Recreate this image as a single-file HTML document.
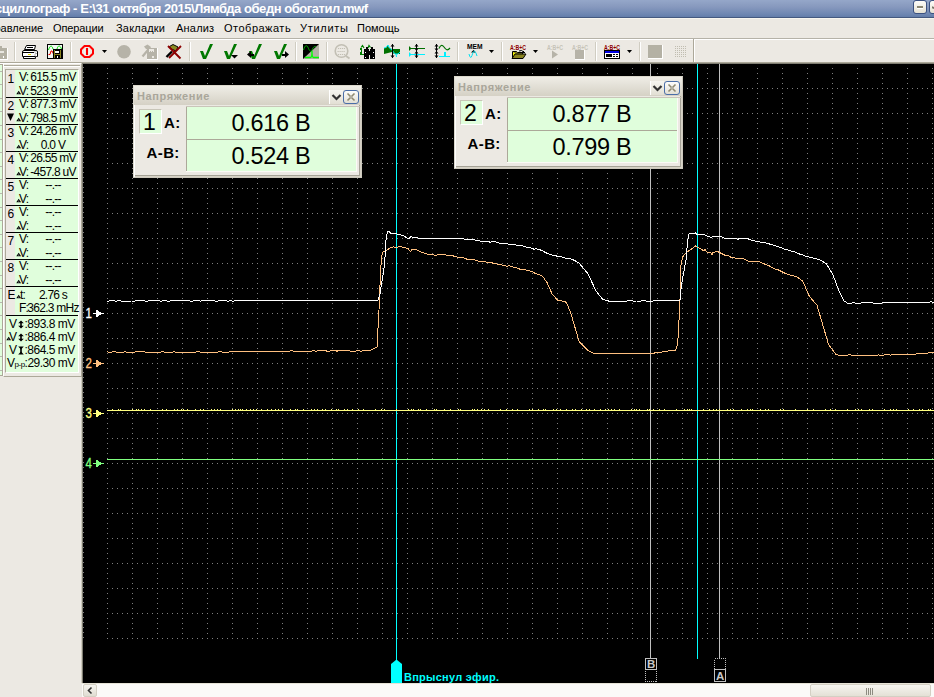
<!DOCTYPE html>
<html><head><meta charset="utf-8">
<style>
*{margin:0;padding:0;box-sizing:border-box}
html,body{width:934px;height:697px;overflow:hidden;background:#ECE9E3;font-family:"Liberation Sans",sans-serif;}
.a{position:absolute}
#title{left:0;top:0;width:934px;height:18px;background:linear-gradient(#95a7c9,#8799be 40%,#6d86b1 85%,#637da9);border-bottom:1px solid #44597f}
#title span{position:absolute;left:-5px;top:1px;font-weight:bold;font-size:13px;color:#fff;white-space:nowrap;letter-spacing:-0.45px}
.wbtn{position:absolute;top:0;width:14px;height:14px;border:1px solid #3b5180;border-radius:3px;background:linear-gradient(#fdfcf8,#e6e2d4)}
#menu{left:0;top:18px;width:934px;height:20px;background:#ECE9E3;border-top:1px solid #f7f5ee}
#menu span{position:absolute;top:3px;font-size:11px;color:#000;white-space:nowrap}
#tb{left:0;top:39px;width:934px;height:23px;background:#ECE9E3;border-top:1px solid #fff}
.sep{position:absolute;top:5px;width:2px;height:19px;border-left:1px solid #c5c2b2;border-right:1px solid #fff}
#graph{left:81px;top:62px;width:853px;height:621px;background:#000;border-top:1px solid #aca899;border-left:1px solid #cfccbf;box-shadow:inset 1px 1px 0 #7f7d72}
#lp{left:0;top:62px;width:82px;height:314px}
.lt{position:absolute;font-size:12px;color:#000;white-space:nowrap;letter-spacing:-0.75px}
.dlg{position:absolute;width:229px;height:93px;background:#ECE9E3;border:1px solid #dcd9cd;border-right-color:#cdc9bd;border-bottom-color:#cdc9bd;box-shadow:inset 1px 1px 0 #fff,inset -1px -1px 0 #d6d2c6,inset -2px -2px 0 #a5a296}
.dlg .tt{position:absolute;left:0;top:0;width:227px;height:19px;background:linear-gradient(#efede6,#d5d1c5)}
.dlg .tt span{position:absolute;left:3px;top:4px;font-weight:bold;font-size:11px;color:#a9a69a;letter-spacing:0.6px}
.cell{position:absolute;background:#E0FEDC}
.val{position:absolute;font-size:23.5px;color:#000;white-space:nowrap;letter-spacing:-0.3px}
.lab{position:absolute;font-weight:bold;font-size:15px;color:#000;white-space:nowrap}
</style></head><body>
<div id="title" class="a"><span>сциллограф - E:\31 октября 2015\Лямбда обедн обогатил.mwf</span>
<div class="wbtn" style="left:913px"><div style="position:absolute;left:3px;top:5px;width:6px;height:3px;background:#8a8672;border-bottom:1px solid #fff"></div></div>
<div class="wbtn" style="left:929px"><div style="position:absolute;left:2px;top:6px;width:4px;height:2px;background:#7a776a;transform:skewY(20deg)"></div></div>
</div>
<div id="menu" class="a">
<span style="left:-18px">Управление</span>
<span style="left:53px;letter-spacing:-0.1px">Операции</span>
<span style="left:116px;letter-spacing:0.2px">Закладки</span>
<span style="left:176px;letter-spacing:0.2px">Анализ</span>
<span style="left:224px;letter-spacing:0.5px">Отображать</span>
<span style="left:300px;letter-spacing:0.7px">Утилиты</span>
<span style="left:357px">Помощь</span>
</div>
<div style="position:absolute;left:0;top:38px;width:934px;height:1px;background:#b5b2a8"></div>
<div id="tb" class="a"></div>
<svg class="a" style="left:0;top:38px" width="934" height="24" viewBox="0 38 934 24" shape-rendering="crispEdges">
<rect x="14" y="42" width="1" height="19" fill="#d0cdc2"/><rect x="15" y="42" width="1" height="19" fill="#fff"/>
<rect x="70" y="42" width="1" height="19" fill="#d0cdc2"/><rect x="71" y="42" width="1" height="19" fill="#fff"/>
<rect x="189" y="42" width="1" height="19" fill="#d0cdc2"/><rect x="190" y="42" width="1" height="19" fill="#fff"/>
<rect x="295" y="42" width="1" height="19" fill="#d0cdc2"/><rect x="296" y="42" width="1" height="19" fill="#fff"/>
<rect x="326" y="42" width="1" height="19" fill="#d0cdc2"/><rect x="327" y="42" width="1" height="19" fill="#fff"/>
<rect x="457" y="42" width="1" height="19" fill="#d0cdc2"/><rect x="458" y="42" width="1" height="19" fill="#fff"/>
<rect x="501" y="42" width="1" height="19" fill="#d0cdc2"/><rect x="502" y="42" width="1" height="19" fill="#fff"/>
<rect x="595" y="42" width="1" height="19" fill="#d0cdc2"/><rect x="596" y="42" width="1" height="19" fill="#fff"/>
<rect x="639" y="42" width="1" height="19" fill="#d0cdc2"/><rect x="640" y="42" width="1" height="19" fill="#fff"/>
<rect x="693" y="39" width="1" height="23" fill="#aca899"/><rect x="694" y="39" width="1" height="23" fill="#fff"/>
<path d="M0 46h2v2h5v11H0z" fill="#b4b1a4"/><rect x="7" y="48" width="1" height="12" fill="#fff"/><rect x="0" y="59" width="8" height="1" fill="#fff"/><rect x="0" y="51" width="4" height="2" fill="#e8e6e0"/><rect x="3" y="56" width="1" height="2" fill="#fff"/>
<g shape-rendering="auto"><path d="M26.5 45.5 H35.5 L34.5 49.5 H24.5 Z" fill="#fff" stroke="#000" stroke-width="1"/><rect x="27" y="47" width="6" height="1" fill="#000"/><path d="M24 50.5 H36 Q37.5 50.5 37.5 52 V56.5 H22.5 V52 Q22.5 50.5 24 50.5Z" fill="#fff" stroke="#000" stroke-width="1"/><rect x="23" y="52" width="11" height="1" fill="#000"/><rect x="28" y="54" width="3" height="1" fill="#e8e000"/><path d="M23.5 56.5 H35.5 V58.5 H23.5 Z" fill="#fff" stroke="#000" stroke-width="1"/><path d="M35 51.5v1M36 53v1M35 54.5v1M36 56v1M35 57.5v1" stroke="#666" stroke-width="1"/></g>
<rect x="47.5" y="44.5" width="15" height="14" fill="#f4f8f4" stroke="#000"/><path d="M48.5 50 C50 45,52 45,53 49 M57 49 C58 45,60 45,61.5 49" fill="none" stroke="#00e000" stroke-width="1" shape-rendering="auto"/><path d="M48.5 54.5 L50 54.5 L51 51 L52 51 L53.5 54" fill="none" stroke="#f00000" stroke-width="1" shape-rendering="auto"/><rect x="53" y="49" width="9" height="9" fill="#000"/><rect x="54" y="50" width="1" height="8" fill="#8a8420"/><rect x="60" y="50" width="1" height="8" fill="#8a8420"/><rect x="55" y="51" width="4" height="2" fill="#fff"/><rect x="55" y="54" width="5" height="1" fill="#8a8420"/><rect x="57" y="56" width="1" height="2" fill="#fff"/>
<path d="M84.5 46 H89.5 L93 49.5 V53.5 L89.5 57 H84.5 L81 53.5 V49.5 Z" fill="none" stroke="#ff0000" stroke-width="2" shape-rendering="auto"/><path d="M84.2 48.5 V54.5 M89.8 48.5 V54.5" stroke="#eef8f4" stroke-width="1"/><rect x="86" y="48" width="2" height="7" fill="#ff0000"/>
<path d="M102 50h5l-2.5 3z" fill="#000" shape-rendering="auto"/>
<path d="M489 50h5l-2.5 3z" fill="#000" shape-rendering="auto"/>
<path d="M533 50h5l-2.5 3z" fill="#000" shape-rendering="auto"/>
<path d="M627 50h5l-2.5 3z" fill="#000" shape-rendering="auto"/>
<circle cx="124" cy="51.8" r="6.8" fill="#b6b3a8" shape-rendering="auto"/>
<path d="M142.5 56.5 L147.5 50.5" stroke="#b6b3a8" stroke-width="2.2" shape-rendering="auto"/><path d="M144 46.5 L147.5 44.5 L151 47 L149.5 50 L146 49z" fill="#b6b3a8" shape-rendering="auto"/><rect x="147" y="48" width="10" height="11" fill="#b6b3a8"/><rect x="157" y="48" width="1" height="12" fill="#fff"/><rect x="147" y="59" width="11" height="1" fill="#fff"/><path d="M149 49h5v3l-1.5-1-1 1-1-1-1.5 1z" fill="#ECE9E3"/><rect x="152" y="56" width="2" height="2" fill="#ECE9E3"/>
<path d="M166.5 57 L172 51.5" stroke="#000" stroke-width="2.4" shape-rendering="auto"/><path d="M169.5 46.5 L173 44.5 L178 47 L176 51 L171.5 49z" fill="#8a8a20" stroke="#000" stroke-width="1" shape-rendering="auto"/><path d="M168 46 L180.5 58.5 M181 46 L169 58" stroke="#8c0000" stroke-width="1.9" shape-rendering="auto"/>
<path d="M200 51 L203 51 L205 56 L210 44 L213 44 L206 59 L203 59 Z" fill="#007800" shape-rendering="auto"/>
<path d="M224 51 L227 51 L229 56 L234 44 L237 44 L230 59 L227 59 Z" fill="#007800" shape-rendering="auto"/><path d="M231 55h7l-3.5 3.5z" fill="#000" shape-rendering="auto"/>
<path d="M249 51 L252 51 L254 56 L259 44 L262 44 L255 59 L252 59 Z" fill="#007800" shape-rendering="auto"/><path d="M247 54.5l4-3.5v7z" fill="#000" shape-rendering="auto"/><rect x="250" y="54" width="4" height="1.5" fill="#000"/>
<path d="M274 51 L277 51 L279 56 L284 44 L287 44 L280 59 L277 59 Z" fill="#007800" shape-rendering="auto"/><path d="M289 54.5l-4-3.5v7z" fill="#000" shape-rendering="auto"/><rect x="282" y="54" width="4" height="1.5" fill="#000"/>
<rect x="303" y="44" width="16" height="15" fill="#000"/><path d="M319 44 L319 59 L303 59 Z" fill="#b4b1a6" shape-rendering="auto"/><path d="M303.5 50 C305 44.5,307 44.5,308.5 48.5 C310 52,311.5 52,312.5 49 C313.5 46.5,315 46,316 47" fill="none" stroke="#00b000" stroke-width="1" shape-rendering="auto"/><path d="M305 57.5 H310.5 Q312 57.5 312 51 Q312 57.5 313.5 57.5 H319" fill="none" stroke="#00ff00" stroke-width="1.3" shape-rendering="auto"/>
<circle cx="341.5" cy="51" r="6.3" fill="none" stroke="#c2bfb4" stroke-width="1.6" shape-rendering="auto"/><path d="M338 48.5h7M337.5 51.5h8M338 54.5h7" stroke="#c2bfb4" stroke-width="1" stroke-dasharray="1.2,0.8" shape-rendering="auto"/><path d="M346 56l3.5 2.5" stroke="#c2bfb4" stroke-width="1.8" shape-rendering="auto"/>
<path d="M361 47.5 L362.5 45.5 L364 48 M368 48 L369 45.5 L370.5 47.5" fill="none" stroke="#008000" stroke-width="1.2" shape-rendering="auto"/><path d="M360 48h2v2h-2zM360 52h2v2h-2zM361 50h1v2h-1z" fill="#008000"/><rect x="360" y="54" width="6" height="1" fill="#008000"/><rect x="364" y="49" width="5" height="10" fill="#000"/><rect x="370" y="49" width="5" height="10" fill="#000"/><rect x="368" y="51" width="3" height="4" fill="#000"/><rect x="366" y="47" width="2" height="2" fill="#000"/><rect x="371" y="47" width="2" height="2" fill="#000"/><rect x="365" y="57" width="1" height="1" fill="#fff"/><rect x="373" y="57" width="1" height="1" fill="#fff"/><rect x="365" y="52" width="1" height="1" fill="#fff"/><rect x="373" y="52" width="1" height="1" fill="#fff"/>
<path d="M384 48 L386 48 L388 45 L389 48 L392 49 L400 49 L400 54 L394 54 L392 52 L384 54z" fill="#007000" shape-rendering="auto"/><path d="M384 48 L386 47.5 L388 45 L389.5 48 L392 50 L395 54 L398 54 L400 52 M396 54 L396.5 57" fill="none" stroke="#00f0ff" stroke-width="1" shape-rendering="auto"/><rect x="392" y="44" width="1" height="14" fill="#000"/><path d="M390.5 46.5 L392.5 44 L394.5 46.5z M390.5 55.5 L392.5 58 L394.5 55.5z" fill="#000" shape-rendering="auto"/>
<rect x="411" y="48" width="14" height="1" fill="#007000"/><path d="M409 46v5l2.5-2.5z" fill="#007000" shape-rendering="auto"/><rect x="411" y="54" width="14" height="1" fill="#00f0ff"/><path d="M409 52v5l2.5-2.5z" fill="#00f0ff" shape-rendering="auto"/><rect x="416" y="44" width="1" height="7" fill="#000"/><path d="M414.5 46.5 L416.5 44 L418.5 46.5z M414.5 48.5 L416.5 51 L418.5 48.5z" fill="#000" shape-rendering="auto"/><rect x="416" y="51" width="1" height="7" fill="#000"/><path d="M414.5 53.5 L416.5 51 L418.5 53.5z M414.5 55.5 L416.5 58 L418.5 55.5z" fill="#000" shape-rendering="auto"/>
<rect x="436" y="44" width="1" height="7" fill="#000"/><path d="M434.5 46.5 L436.5 44 L438.5 46.5z M434.5 48.5 L436.5 51 L438.5 48.5z" fill="#000" shape-rendering="auto"/><rect x="436" y="51" width="1" height="7" fill="#000"/><path d="M434.5 53.5 L436.5 51 L438.5 53.5z M434.5 55.5 L436.5 58 L438.5 55.5z" fill="#000" shape-rendering="auto"/><path d="M439 48.5 C440.5 45,442 44.5,444 47 C446 50,447.5 51,450 48" fill="none" stroke="#007000" stroke-width="1.2" shape-rendering="auto"/><path d="M439 56.5h5.5v-3.5h1v3.5h4.5" fill="none" stroke="#00f0ff" stroke-width="1.1"/>
<text x="467" y="49" font-family="Liberation Sans" font-weight="bold" font-size="6.5" textLength="15.5" lengthAdjust="spacingAndGlyphs" fill="#000" shape-rendering="auto">MEM</text><path d="M471 52.5l2.5-2.5 2.5 2.5z" fill="#000" shape-rendering="auto"/><path d="M469 54 Q470.5 60 472 55.5 Q473.5 50 475 51.5 Q476 52.5 477 56" fill="none" stroke="#00e0f0" stroke-width="1" shape-rendering="auto"/>
<text x="510" y="49.5" font-family="Liberation Sans" font-weight="bold" font-size="6.8" textLength="16" lengthAdjust="spacingAndGlyphs" fill="#8c0000" shape-rendering="auto">A:B+C</text><path d="M512.5 58.5 V51.5 H516.5 L517.5 52.5 H522.5 V54" fill="#8a8420" stroke="#000" stroke-width="1" shape-rendering="auto"/><path d="M513 52 L517 54.5 L513 56.5z" fill="#f0f000" shape-rendering="auto"/><path d="M512 58.5 L515 54 L526 54 L523 58.5z" fill="#8a8420" stroke="#000" stroke-width="1" shape-rendering="auto"/><path d="M519 51 Q522 49.5 523.5 52" fill="none" stroke="#000" stroke-width="1" shape-rendering="auto"/><path d="M522 52.5h3l-1.5-2z" fill="#000"/>
<text x="547" y="49.5" font-family="Liberation Sans" font-weight="bold" font-size="6.8" textLength="16" lengthAdjust="spacingAndGlyphs" fill="#c6c3b8" shape-rendering="auto">A:B+C</text><path d="M552 50.5 L558 54.5 L552 58.5z" fill="#b6b3a8" shape-rendering="auto"/>
<text x="572" y="49.5" font-family="Liberation Sans" font-weight="bold" font-size="6.8" textLength="16" lengthAdjust="spacingAndGlyphs" fill="#c6c3b8" shape-rendering="auto">A:B+C</text><rect x="575" y="50" width="9" height="9" fill="#b6b3a8"/><rect x="584" y="50" width="1" height="10" fill="#fff"/><rect x="575" y="59" width="10" height="1" fill="#fff"/>
<text x="604" y="49.5" font-family="Liberation Sans" font-weight="bold" font-size="6.8" textLength="16" lengthAdjust="spacingAndGlyphs" fill="#8c0000" shape-rendering="auto">A:B+C</text><rect x="604.5" y="50.5" width="15" height="8" fill="#fff" stroke="#000"/><rect x="605" y="51" width="14" height="2" fill="#0000e0"/><rect x="606" y="54" width="6" height="3" fill="#000"/><rect x="613" y="54" width="2" height="1" fill="#000"/><rect x="616" y="54" width="2" height="1" fill="#000"/><rect x="613" y="56" width="2" height="1" fill="#000"/><rect x="616" y="56" width="2" height="1" fill="#000"/>
<rect x="648" y="45" width="14" height="13" fill="#b4b1a4"/><rect x="662" y="45" width="1" height="14" fill="#fff"/><rect x="648" y="58" width="15" height="1" fill="#fff"/>
<g fill="#c0bdb0"><rect x="675" y="46" width="1" height="1"/><rect x="675" y="48" width="1" height="1"/><rect x="675" y="50" width="1" height="1"/><rect x="675" y="52" width="1" height="1"/><rect x="675" y="54" width="1" height="1"/><rect x="675" y="56" width="1" height="1"/><rect x="677" y="46" width="1" height="1"/><rect x="677" y="48" width="1" height="1"/><rect x="677" y="50" width="1" height="1"/><rect x="677" y="52" width="1" height="1"/><rect x="677" y="54" width="1" height="1"/><rect x="677" y="56" width="1" height="1"/><rect x="679" y="46" width="1" height="1"/><rect x="679" y="48" width="1" height="1"/><rect x="679" y="50" width="1" height="1"/><rect x="679" y="52" width="1" height="1"/><rect x="679" y="54" width="1" height="1"/><rect x="679" y="56" width="1" height="1"/><rect x="681" y="46" width="1" height="1"/><rect x="681" y="48" width="1" height="1"/><rect x="681" y="50" width="1" height="1"/><rect x="681" y="52" width="1" height="1"/><rect x="681" y="54" width="1" height="1"/><rect x="681" y="56" width="1" height="1"/><rect x="683" y="46" width="1" height="1"/><rect x="683" y="48" width="1" height="1"/><rect x="683" y="50" width="1" height="1"/><rect x="683" y="52" width="1" height="1"/><rect x="683" y="54" width="1" height="1"/><rect x="683" y="56" width="1" height="1"/><rect x="685" y="46" width="1" height="1"/><rect x="685" y="48" width="1" height="1"/><rect x="685" y="50" width="1" height="1"/><rect x="685" y="52" width="1" height="1"/><rect x="685" y="54" width="1" height="1"/><rect x="685" y="56" width="1" height="1"/></g>
</svg>
<div id="graph" class="a"></div>
<svg width="851" height="619" viewBox="83 64 851 619" style="position:absolute;left:83px;top:64px;display:block" shape-rendering="crispEdges">
<defs><pattern id="gv" x="107" y="68" width="25" height="5" patternUnits="userSpaceOnUse"><rect width="1" height="1" fill="#808080"/></pattern><pattern id="gh" x="107" y="88" width="5" height="25" patternUnits="userSpaceOnUse"><rect width="1" height="1" fill="#808080"/></pattern><pattern id="tk" x="83" y="67" width="3" height="5" patternUnits="userSpaceOnUse"><rect width="1" height="1" fill="#808080"/></pattern></defs>
<rect x="83" y="64" width="851" height="619" fill="#000"/>
<rect x="107" y="64" width="827" height="575" fill="url(#gv)"/>
<rect x="107" y="88" width="827" height="551" fill="url(#gh)"/>
<rect x="83" y="64" width="2" height="575" fill="url(#tk)"/>
<rect x="650" y="64" width="1" height="594" fill="#c0c0c0"/>
<rect x="719" y="64" width="1" height="594" fill="#c0c0c0"/>
<rect x="396" y="64" width="1" height="597" fill="#00ffff"/>
<rect x="697" y="64" width="1" height="595" fill="#00ffff"/>
<g fill="none" stroke-linejoin="round" shape-rendering="crispEdges">
<rect x="107" y="410" width="827" height="1" fill="#ffff80"/>
<path d="M112 409.5h1M118 409.5h1M120 409.5h1M132 409.5h1M136 409.5h1M138 409.5h1M141 409.5h1M144 409.5h1M150 409.5h1M162 409.5h1M166 409.5h1M174 409.5h1M177 409.5h1M181 409.5h1M183 409.5h1M187 409.5h1M195 409.5h1M200 409.5h1M203 409.5h1M211 409.5h1M214 409.5h1M217 409.5h1M220 409.5h1M232 409.5h1M235 409.5h1M238 409.5h1M240 409.5h1M242 409.5h1M246 409.5h1M250 409.5h1M253 409.5h1M256 409.5h1M261 409.5h1M267 409.5h1M271 409.5h1M275 409.5h1M278 409.5h1M282 409.5h1M290 409.5h1M295 409.5h1M297 409.5h1M303 409.5h1M311 409.5h1M314 409.5h1M317 409.5h1M322 409.5h1M325 409.5h1M331 409.5h1M336 409.5h1M338 409.5h1M344 409.5h1M347 409.5h1M352 409.5h1M358 409.5h1M363 409.5h1M375 409.5h1M381 409.5h1M384 409.5h1M396 409.5h1M408 409.5h1M411 409.5h1M413 409.5h1M418 409.5h1M420 409.5h1M426 409.5h1M434 409.5h1M436 409.5h1M444 409.5h1M450 409.5h1M458 409.5h1M460 409.5h1M472 409.5h1M474 409.5h1M477 409.5h1M481 409.5h1M484 409.5h1M488 409.5h1M500 409.5h1M506 409.5h1M512 409.5h1M517 409.5h1M529 409.5h1M532 409.5h1M538 409.5h1M543 409.5h1M545 409.5h1M553 409.5h1M556 409.5h1M560 409.5h1M566 409.5h1M572 409.5h1M575 409.5h1M581 409.5h1M586 409.5h1M589 409.5h1M594 409.5h1M600 409.5h1M605 409.5h1M608 409.5h1M611 409.5h1M614 409.5h1M619 409.5h1M631 409.5h1M634 409.5h1M636 409.5h1M639 409.5h1M647 409.5h1M649 409.5h1M653 409.5h1M659 409.5h1M664 409.5h1M676 409.5h1M684 409.5h1M687 409.5h1M689 409.5h1M691 409.5h1M703 409.5h1M709 409.5h1M713 409.5h1M716 409.5h1M719 409.5h1M727 409.5h1M730 409.5h1M733 409.5h1M741 409.5h1M747 409.5h1M750 409.5h1M752 409.5h1M760 409.5h1M765 409.5h1M768 409.5h1M780 409.5h1M783 409.5h1M795 409.5h1M807 409.5h1M813 409.5h1M825 409.5h1M830 409.5h1M835 409.5h1M847 409.5h1M855 409.5h1M858 409.5h1M861 409.5h1M869 409.5h1M872 409.5h1M884 409.5h1M890 409.5h1M893 409.5h1M896 409.5h1M908 409.5h1M913 409.5h1M919 409.5h1M922 409.5h1M928 409.5h1M930 409.5h1" stroke="#ffff80" stroke-width="1"/>
<polyline points="107.0,459.5 934.0,459.5" stroke="#80ff80" stroke-width="1"/>
<polyline points="107.0,351.9 110.1,352.2 113.1,351.8 116.2,352.0 119.2,352.2 122.3,352.2 125.3,351.8 128.4,352.4 131.5,352.1 134.5,352.1 137.6,351.6 140.6,352.0 143.7,351.8 146.7,352.2 149.8,352.0 152.9,352.3 155.9,352.1 159.0,352.3 162.0,351.9 165.1,352.1 168.1,352.2 171.2,352.3 174.3,351.9 177.3,352.3 180.4,352.3 183.4,352.2 186.5,352.4 189.5,352.4 192.6,352.0 195.7,352.0 198.7,351.7 201.8,352.3 204.8,352.4 207.9,352.0 210.9,352.2 214.0,352.2 217.0,352.2 220.0,351.7 223.0,352.2 226.0,352.0 229.0,352.0 232.0,351.8 235.0,351.9 238.0,352.0 241.0,351.9 244.0,351.9 247.0,351.3 250.0,351.4 253.0,351.6 256.0,351.8 259.0,351.4 262.0,351.8 265.0,351.7 268.0,351.1 271.0,351.5 274.0,351.3 277.0,351.1 280.0,351.1 283.0,351.3 286.0,351.1 289.0,351.1 292.0,350.9 295.0,351.3 298.0,351.2 301.0,351.4 304.0,351.3 307.0,351.0 310.0,351.6 313.0,350.7 316.0,351.1 319.0,350.9 322.0,351.0 325.0,350.7 328.0,351.3 331.0,350.9 334.0,350.6 337.0,351.1 340.0,350.6 343.0,351.0 346.0,350.8 349.0,350.9 352.0,351.3 355.0,351.1 358.0,350.7 361.0,351.1 364.0,350.9 367.0,350.6 370.0,350.4 373.0,349.1 377.0,347.0 379.0,310.0 380.4,276.0 381.5,256.6 383.0,251.6 386.5,250.5 390.0,247.9 393.5,246.9 396.0,247.6 399.5,246.4 405.0,247.9 408.0,248.5 410.5,251.5 412.0,249.1 415.0,249.1 420.0,251.6 424.0,253.1 428.0,254.2 431.0,254.6 434.0,254.9 436.0,255.4 438.0,254.4 441.5,254.5 445.0,254.8 448.5,255.7 452.0,255.4 455.0,256.6 458.0,257.2 461.0,257.6 464.0,257.9 467.0,259.2 470.1,259.3 473.1,259.8 476.2,260.2 479.3,261.4 482.4,261.5 485.4,261.8 488.5,262.5 491.6,262.7 494.6,263.7 497.7,264.1 500.8,264.5 503.9,265.5 506.9,266.1 510.0,265.9 513.1,267.1 516.3,267.6 519.4,269.0 522.6,269.6 525.7,269.9 528.9,270.7 532.0,271.4 535.5,273.7 539.1,274.6 542.6,276.4 547.0,282.4 552.3,294.3 557.6,300.1 562.0,301.1 566.3,302.2 570.6,312.6 574.9,327.1 579.2,341.6 583.5,345.9 587.8,350.3 591.0,351.9 594.2,353.7 597.3,353.2 600.4,353.7 603.5,353.3 606.6,353.5 609.7,353.4 612.8,353.3 615.9,353.5 619.0,353.5 622.1,353.4 625.2,353.7 628.3,353.6 631.4,353.1 634.5,353.3 637.6,353.5 640.7,353.9 643.8,353.8 646.9,353.5 650.0,353.1 653.2,353.3 656.4,352.6 659.6,352.3 662.8,351.9 665.9,351.4 669.1,350.9 672.3,350.8 675.5,350.0 677.6,344.7 679.8,306.0 681.0,265.0 682.5,257.0 686.0,253.0 690.0,250.0 693.0,248.0 695.5,246.0 698.0,247.4 702.0,249.5 704.0,251.0 705.0,249.5 707.0,251.9 711.0,253.0 712.0,254.5 713.0,252.3 718.0,251.7 720.0,252.8 725.0,255.3 728.0,255.6 731.0,257.3 736.0,258.2 739.0,258.3 742.0,258.5 745.0,259.3 749.0,261.4 752.6,261.0 756.2,261.6 759.8,262.0 762.9,263.4 766.0,264.6 769.1,265.8 772.1,267.6 775.2,269.2 778.3,269.9 781.4,271.5 784.8,273.2 788.3,274.5 791.7,275.6 795.2,276.3 798.6,278.0 802.9,281.4 806.1,288.9 809.4,296.4 813.1,300.7 816.9,305.0 822.3,323.3 825.5,334.1 828.7,344.9 832.5,349.8 836.3,354.8 839.6,355.2 843.0,355.3 846.3,355.2 849.6,354.7 853.0,355.5 856.3,355.1 859.7,355.6 863.0,356.0 866.1,355.7 869.1,355.1 872.2,355.2 875.3,355.7 878.4,354.9 881.4,355.3 884.5,355.0 887.6,354.7 890.6,355.1 893.7,354.5 896.8,354.5 899.9,354.6 902.9,354.3 906.0,354.2 909.1,354.4 912.2,354.3 915.3,354.2 918.4,353.3 921.6,353.3 924.7,353.0 927.8,353.0 930.9,352.6 934.0,352.4" stroke="#ffc080" stroke-width="1"/>
<polyline points="107.0,301.4 110.0,300.9 113.0,300.6 116.0,301.2 119.0,300.7 122.1,301.1 125.1,301.0 128.1,301.3 131.1,301.0 134.1,301.1 137.1,300.7 140.1,301.0 143.1,300.7 146.1,301.2 149.2,300.9 152.2,300.6 155.2,300.7 158.2,300.8 161.2,301.1 164.2,300.6 167.2,301.1 170.2,301.0 173.2,300.5 176.3,301.0 179.3,300.5 182.3,300.5 185.3,300.9 188.3,300.6 191.3,301.2 194.3,300.8 197.3,300.7 200.3,301.1 203.4,300.4 206.4,301.0 209.4,300.4 212.4,300.5 215.4,301.2 218.4,301.0 221.4,300.5 224.4,300.4 227.4,301.2 230.5,300.9 233.5,301.1 236.5,300.4 239.5,300.9 242.5,300.6 245.5,300.5 248.5,300.6 251.5,300.8 254.5,300.6 257.6,300.6 260.6,300.4 263.6,301.0 266.6,300.8 269.6,301.0 272.6,300.6 275.6,301.0 278.6,300.7 281.6,300.8 284.7,300.7 287.7,300.9 290.7,300.6 293.7,300.3 296.7,300.2 299.7,300.4 302.7,300.2 305.7,301.0 308.7,300.6 311.8,300.9 314.8,300.2 317.8,300.6 320.8,301.0 323.8,300.7 326.8,300.5 329.8,300.6 332.8,300.2 335.8,300.3 338.9,300.3 341.9,300.5 344.9,300.5 347.9,300.9 350.9,300.2 353.9,300.3 356.9,300.3 359.9,300.2 362.9,300.3 366.0,300.3 369.0,300.5 372.0,300.1 375.0,300.9 378.0,300.5 380.0,294.0 384.5,265.0 386.0,240.0 387.5,231.4 389.0,231.5 391.0,233.4 396.0,233.7 400.0,234.7 404.0,236.0 407.0,237.9 409.0,238.5 411.0,236.2 413.0,237.7 416.3,237.6 419.7,238.3 423.0,238.7 426.3,238.2 429.6,238.2 432.9,238.1 436.1,238.3 439.4,238.1 442.7,238.4 446.0,238.9 450.0,238.9 454.0,238.5 458.0,238.3 461.2,238.4 464.5,239.2 467.8,239.5 471.0,239.3 474.2,239.8 477.5,240.5 480.8,241.1 484.0,241.1 487.1,241.3 490.2,242.2 493.3,241.7 496.4,242.1 499.5,243.2 502.6,243.2 505.7,243.3 508.8,244.1 511.9,244.9 515.0,244.8 518.1,245.3 521.2,245.7 524.4,246.4 527.5,247.8 530.6,248.0 533.8,249.1 536.9,248.9 540.0,249.8 543.0,251.1 546.0,252.8 549.0,254.0 552.0,254.9 555.0,255.7 558.0,256.3 561.0,256.7 564.0,257.4 567.0,258.9 570.0,258.8 573.0,259.8 576.0,261.3 579.0,263.0 582.0,266.6 585.0,270.2 588.0,273.8 592.0,282.4 596.0,291.0 599.5,295.4 603.0,299.7 606.0,300.2 609.0,301.2 612.1,301.0 615.2,301.4 618.3,301.7 621.3,301.3 624.4,301.5 627.5,300.9 630.6,300.7 633.7,301.1 636.8,301.0 639.9,301.1 643.0,300.9 646.0,301.0 649.1,301.1 652.2,301.2 655.3,300.6 658.4,300.7 661.5,301.0 664.6,300.4 667.7,300.3 670.7,300.4 673.8,300.2 676.9,300.8 680.0,300.5 681.0,289.0 683.0,276.0 686.0,260.0 687.5,242.0 689.0,233.8 693.0,233.0 694.0,234.0 695.5,233.0 697.0,234.8 698.0,234.2 701.0,234.1 704.0,234.5 706.0,235.8 709.0,236.6 711.0,237.4 714.0,236.1 716.0,236.8 721.0,236.6 726.0,238.7 729.0,238.1 732.0,238.2 735.0,238.3 738.0,239.4 740.0,238.1 744.0,238.7 748.0,238.8 751.8,240.2 755.5,241.1 759.8,242.0 764.0,242.3 767.5,243.5 771.0,244.4 774.4,245.4 777.9,246.8 781.4,247.7 784.8,249.2 788.3,250.1 791.7,251.3 795.2,252.0 798.6,253.7 802.9,255.1 807.2,256.7 810.4,257.3 813.6,258.1 816.8,258.9 820.0,259.8 823.3,261.9 826.6,264.0 829.8,269.5 833.0,275.0 836.2,283.5 839.5,292.0 843.8,300.7 848.0,303.5 851.1,303.1 854.1,302.8 857.2,303.4 860.2,303.2 863.3,302.7 866.4,302.7 869.4,302.7 872.5,302.9 875.5,303.3 878.6,303.4 881.6,303.0 884.7,302.7 887.8,302.8 890.9,302.7 893.9,302.6 897.0,302.3 900.1,302.8 903.2,302.9 906.3,302.8 909.4,302.2 912.4,302.5 915.5,302.2 918.6,302.6 921.7,302.3 924.8,302.7 927.8,302.6 930.9,301.9 934.0,302.2" stroke="#ffffff" stroke-width="1"/>
</g>
<polygon points="391,664 396.5,659.5 402,664 402,683 391,683" fill="#00ffff" shape-rendering="auto"/>
<rect x="645.5" y="658.5" width="11" height="11" fill="none" stroke="#c0c0c0"/>
<rect x="645.5" y="669.5" width="11" height="12" fill="none" stroke="#c0c0c0" stroke-dasharray="1,1"/>
<rect x="714.5" y="658.5" width="11" height="11" fill="none" stroke="#c0c0c0" stroke-dasharray="1,1"/>
<rect x="714.5" y="669.5" width="11" height="12" fill="none" stroke="#c0c0c0"/>
<text x="651.2" y="668.3" font-family="Liberation Sans" font-weight="bold" font-size="11.5" fill="#c8c8c8" text-anchor="middle" shape-rendering="auto">B</text>
<text x="720.2" y="680.3" font-family="Liberation Sans" font-weight="bold" font-size="11.5" fill="#c8c8c8" text-anchor="middle" shape-rendering="auto">A</text>
<text x="404" y="681" font-family="Liberation Sans" font-weight="bold" font-size="11" letter-spacing="0.25" fill="#00ffff" shape-rendering="auto">Впрыснул эфир.</text>
<text x="85.6" y="318.2" font-family="Liberation Sans" font-weight="normal" stroke="#ffffff" stroke-width="0.35" font-size="14.5" textLength="6.4" lengthAdjust="spacingAndGlyphs" fill="#ffffff" shape-rendering="auto">1</text>
<rect x="93" y="313" width="11" height="1" fill="#ffffff"/>
<polygon points="96,309.5 102,313.5 96,317.5" fill="#ffffff"/>
<text x="85.6" y="368.2" font-family="Liberation Sans" font-weight="normal" stroke="#ffc080" stroke-width="0.35" font-size="14.5" textLength="6.4" lengthAdjust="spacingAndGlyphs" fill="#ffc080" shape-rendering="auto">2</text>
<rect x="93" y="363" width="11" height="1" fill="#ffc080"/>
<polygon points="96,359.5 102,363.5 96,367.5" fill="#ffc080"/>
<text x="85.6" y="418.2" font-family="Liberation Sans" font-weight="normal" stroke="#ffff80" stroke-width="0.35" font-size="14.5" textLength="6.4" lengthAdjust="spacingAndGlyphs" fill="#ffff80" shape-rendering="auto">3</text>
<rect x="93" y="413" width="11" height="1" fill="#ffff80"/>
<polygon points="96,409.5 102,413.5 96,417.5" fill="#ffff80"/>
<text x="85.6" y="468.2" font-family="Liberation Sans" font-weight="normal" stroke="#80ff80" stroke-width="0.35" font-size="14.5" textLength="6.4" lengthAdjust="spacingAndGlyphs" fill="#80ff80" shape-rendering="auto">4</text>
<rect x="93" y="463" width="11" height="1" fill="#80ff80"/>
<polygon points="96,459.5 102,463.5 96,467.5" fill="#80ff80"/>
</svg>
<div id="lp" class="a">

</div>
<div class="a" style="left:0;top:65px;width:2px;height:310px;background:#E0FEDC"></div>
<div class="a" style="left:0;top:62px;width:82px;height:1px;background:#aca899"></div>
<div class="a" style="left:0;top:63px;width:81px;height:1px;background:#fff"></div>
<div class="a" style="left:0;top:64px;width:3px;height:1px;background:#aca899"></div>
<div class="a" style="left:0;top:71px;width:2px;height:1px;background:#b8b8b0"></div>
<div class="a" style="left:0;top:84px;width:2px;height:1px;background:#b8b8b0"></div>
<div class="a" style="left:0;top:98px;width:2px;height:1px;background:#b8b8b0"></div>
<div class="a" style="left:0;top:111px;width:2px;height:1px;background:#b8b8b0"></div>
<div class="a" style="left:0;top:125px;width:2px;height:1px;background:#b8b8b0"></div>
<div class="a" style="left:0;top:139px;width:2px;height:1px;background:#b8b8b0"></div>
<div class="a" style="left:0;top:152px;width:2px;height:1px;background:#b8b8b0"></div>
<div class="a" style="left:0;top:166px;width:2px;height:1px;background:#b8b8b0"></div>
<div class="a" style="left:0;top:179px;width:2px;height:1px;background:#b8b8b0"></div>
<div class="a" style="left:0;top:193px;width:2px;height:1px;background:#b8b8b0"></div>
<div class="a" style="left:0;top:207px;width:2px;height:1px;background:#b8b8b0"></div>
<div class="a" style="left:0;top:220px;width:2px;height:1px;background:#b8b8b0"></div>
<div class="a" style="left:0;top:234px;width:2px;height:1px;background:#b8b8b0"></div>
<div class="a" style="left:0;top:247px;width:2px;height:1px;background:#b8b8b0"></div>
<div class="a" style="left:0;top:261px;width:2px;height:1px;background:#b8b8b0"></div>
<div class="a" style="left:0;top:275px;width:2px;height:1px;background:#b8b8b0"></div>
<div class="a" style="left:0;top:288px;width:2px;height:1px;background:#b8b8b0"></div>
<div class="a" style="left:0;top:302px;width:2px;height:1px;background:#b8b8b0"></div>
<div class="a" style="left:0;top:315px;width:2px;height:1px;background:#b8b8b0"></div>
<div class="a" style="left:0;top:329px;width:2px;height:1px;background:#b8b8b0"></div>
<div class="a" style="left:0;top:343px;width:2px;height:1px;background:#b8b8b0"></div>
<div class="a" style="left:0;top:356px;width:2px;height:1px;background:#b8b8b0"></div>
<div class="a" style="left:0;top:370px;width:2px;height:1px;background:#b8b8b0"></div>
<div class="a" style="left:0;top:375px;width:3px;height:1px;background:#aca899"></div>
<div class="a" style="left:2px;top:64px;width:1px;height:312px;background:#aca899"></div>
<div class="a" style="left:3px;top:64px;width:79px;height:313px;background:#ECE9E3;border-left:1px solid #fff;border-right:1px solid #aca899;border-bottom:1px solid #aca899"></div>
<div class="a" style="left:4px;top:65px;width:76px;height:1px;background:#aca899"></div>
<div class="a" style="left:4px;top:66px;width:76px;height:1px;background:#fff"></div>
<div class="a" style="left:5px;top:69px;width:74px;height:304px;background:#E0FEDC;border-top:1px solid #aca899;border-left:1px solid #aca899;border-right:1px solid #fff;border-bottom:1px solid #fff"></div>
<div class="a" style="left:6px;top:70px;width:9px;height:245px;background:#ECE9E3"></div>
<div class="a" style="left:6px;top:97px;width:72px;height:1px;background:#000"></div>
<div class="a" style="left:6px;top:124px;width:72px;height:1px;background:#000"></div>
<div class="a" style="left:6px;top:151px;width:72px;height:1px;background:#000"></div>
<div class="a" style="left:6px;top:178px;width:72px;height:1px;background:#000"></div>
<div class="a" style="left:6px;top:205px;width:72px;height:1px;background:#000"></div>
<div class="a" style="left:6px;top:232px;width:72px;height:1px;background:#000"></div>
<div class="a" style="left:6px;top:259px;width:72px;height:1px;background:#000"></div>
<div class="a" style="left:6px;top:286px;width:72px;height:1px;background:#000"></div>
<div class="a" style="left:6px;top:315px;width:72px;height:1px;background:#000"></div>
<div class="lt" style="left:7.5px;top:72px;font-size:12px;letter-spacing:0">1</div>
<div class="lt" style="left:19px;top:70.4px">V:</div>
<svg class="a" style="left:16px;top:90px" width="6" height="5"><path d="M0.3 4.2 L2.7 0.8 L5.1 4.2Z" fill="#000"/><rect x="2.2" y="2.6" width="1" height="1" fill="#9a9a9a"/></svg>
<div class="lt" style="left:19px;top:83.6px">V:</div>
<div class="lt" style="left:28px;width:50px;text-align:center;top:70.4px">615.5 mV</div>
<div class="lt" style="left:28px;width:50px;text-align:center;top:83.6px">523.9 mV</div>
<div class="lt" style="left:7.5px;top:99px;font-size:12px;letter-spacing:0">2</div>
<div class="lt" style="left:19px;top:97.4px">V:</div>
<svg class="a" style="left:16px;top:117px" width="6" height="5"><path d="M0.3 4.2 L2.7 0.8 L5.1 4.2Z" fill="#000"/><rect x="2.2" y="2.6" width="1" height="1" fill="#9a9a9a"/></svg>
<div class="lt" style="left:19px;top:110.6px">V:</div>
<div class="lt" style="left:28px;width:50px;text-align:center;top:97.4px">877.3 mV</div>
<div class="lt" style="left:28px;width:50px;text-align:center;top:110.6px">798.5 mV</div>
<div class="lt" style="left:7.5px;top:126px;font-size:12px;letter-spacing:0">3</div>
<div class="lt" style="left:19px;top:124.4px">V:</div>
<svg class="a" style="left:16px;top:144px" width="6" height="5"><path d="M0.3 4.2 L2.7 0.8 L5.1 4.2Z" fill="#000"/><rect x="2.2" y="2.6" width="1" height="1" fill="#9a9a9a"/></svg>
<div class="lt" style="left:19px;top:137.6px">V:</div>
<div class="lt" style="left:28px;width:50px;text-align:center;top:124.4px">24.26 mV</div>
<div class="lt" style="left:28px;width:50px;text-align:center;top:137.6px">0.0 V</div>
<div class="lt" style="left:7.5px;top:153px;font-size:12px;letter-spacing:0">4</div>
<div class="lt" style="left:19px;top:151.4px">V:</div>
<svg class="a" style="left:16px;top:171px" width="6" height="5"><path d="M0.3 4.2 L2.7 0.8 L5.1 4.2Z" fill="#000"/><rect x="2.2" y="2.6" width="1" height="1" fill="#9a9a9a"/></svg>
<div class="lt" style="left:19px;top:164.6px">V:</div>
<div class="lt" style="left:28px;width:50px;text-align:center;top:151.4px">26.55 mV</div>
<div class="lt" style="left:28px;width:50px;text-align:center;top:164.6px">-457.8 uV</div>
<div class="lt" style="left:7.5px;top:180px;font-size:12px;letter-spacing:0">5</div>
<div class="lt" style="left:19px;top:178.4px">V:</div>
<svg class="a" style="left:16px;top:198px" width="6" height="5"><path d="M0.3 4.2 L2.7 0.8 L5.1 4.2Z" fill="#000"/><rect x="2.2" y="2.6" width="1" height="1" fill="#9a9a9a"/></svg>
<div class="lt" style="left:19px;top:191.6px">V:</div>
<div class="lt" style="left:28px;width:50px;text-align:center;top:178.4px">--.--</div>
<div class="lt" style="left:28px;width:50px;text-align:center;top:191.6px">--.--</div>
<div class="lt" style="left:7.5px;top:207px;font-size:12px;letter-spacing:0">6</div>
<div class="lt" style="left:19px;top:205.4px">V:</div>
<svg class="a" style="left:16px;top:225px" width="6" height="5"><path d="M0.3 4.2 L2.7 0.8 L5.1 4.2Z" fill="#000"/><rect x="2.2" y="2.6" width="1" height="1" fill="#9a9a9a"/></svg>
<div class="lt" style="left:19px;top:218.6px">V:</div>
<div class="lt" style="left:28px;width:50px;text-align:center;top:205.4px">--.--</div>
<div class="lt" style="left:28px;width:50px;text-align:center;top:218.6px">--.--</div>
<div class="lt" style="left:7.5px;top:234px;font-size:12px;letter-spacing:0">7</div>
<div class="lt" style="left:19px;top:232.4px">V:</div>
<svg class="a" style="left:16px;top:252px" width="6" height="5"><path d="M0.3 4.2 L2.7 0.8 L5.1 4.2Z" fill="#000"/><rect x="2.2" y="2.6" width="1" height="1" fill="#9a9a9a"/></svg>
<div class="lt" style="left:19px;top:245.6px">V:</div>
<div class="lt" style="left:28px;width:50px;text-align:center;top:232.4px">--.--</div>
<div class="lt" style="left:28px;width:50px;text-align:center;top:245.6px">--.--</div>
<div class="lt" style="left:7.5px;top:261px;font-size:12px;letter-spacing:0">8</div>
<div class="lt" style="left:19px;top:259.4px">V:</div>
<svg class="a" style="left:16px;top:279px" width="6" height="5"><path d="M0.3 4.2 L2.7 0.8 L5.1 4.2Z" fill="#000"/><rect x="2.2" y="2.6" width="1" height="1" fill="#9a9a9a"/></svg>
<div class="lt" style="left:19px;top:272.6px">V:</div>
<div class="lt" style="left:28px;width:50px;text-align:center;top:259.4px">--.--</div>
<div class="lt" style="left:28px;width:50px;text-align:center;top:272.6px">--.--</div>
<svg class="a" style="left:7px;top:113px" width="8" height="9"><path d="M0 0.5 H7 L3.5 8Z" fill="#000"/></svg>
<div class="lt" style="left:7.5px;top:288px">E</div>
<svg class="a" style="left:16px;top:294px" width="6" height="5"><path d="M0.3 4.2 L2.7 0.8 L5.1 4.2Z" fill="#000"/><rect x="2.2" y="2.6" width="1" height="1" fill="#9a9a9a"/></svg>
<div class="lt" style="left:20px;top:288px">t:</div>
<div class="lt" style="left:28px;width:50px;text-align:center;top:288px">2.76 s</div>
<div class="lt" style="left:19px;top:301px">F:</div>
<div class="lt" style="left:27px;width:52px;text-align:center;top:301px">362.3 mHz</div>
<div class="lt" style="left:9px;top:317px;letter-spacing:-0.5px">V<svg width="6" height="9" style="display:inline-block;vertical-align:-1px;margin:0 1px 0 1px"><path d="M3 0.5L5.8 3.2H0.2z M3 8.5L5.8 5.8H0.2z" fill="#000"/><rect x="2.2" y="2" width="1.6" height="5" fill="#000"/></svg>:893.8 mV</div>
<div class="lt" style="left:9px;top:330px;letter-spacing:-0.5px">V<svg width="6" height="9" style="display:inline-block;vertical-align:-1px;margin:0 1px 0 1px"><path d="M3 0.5L5.8 3.2H0.2z M3 8.5L5.8 5.8H0.2z" fill="#000"/><rect x="2.2" y="2" width="1.6" height="5" fill="#000"/></svg>:886.4 mV</div>
<div class="lt" style="left:9px;top:343px;letter-spacing:-0.5px">V<svg width="6" height="9" style="display:inline-block;vertical-align:-1px;margin:0 1px 0 1px"><path d="M3 3.5L5.8 0.5H0.2z M3 5.5L5.8 8.5H0.2z" fill="#000"/><rect x="2.2" y="2" width="1.6" height="5" fill="#000"/></svg>:864.5 mV</div>
<div class="lt" style="left:7px;top:356px;letter-spacing:-0.5px">V<span style="font-size:8px;letter-spacing:-0.5px">p-p</span>:29.30 mV</div>
<svg class="a" style="left:6px;top:336px" width="6" height="5"><path d="M0.3 4.2 L2.7 0.8 L5.1 4.2Z" fill="#000"/><rect x="2.2" y="2.6" width="1" height="1" fill="#9a9a9a"/></svg>
<div class="dlg" style="left:133px;top:85px">
<div class="tt"><span>Напряжение</span></div>
<div class="a" style="left:195px;top:4px;width:14px;height:14px;background:linear-gradient(#f6f5f0,#e2dfd4);border-left:1px solid #fff"><svg width="14" height="14" style="display:block"><path d="M2.5 5 L6.5 9 L10.5 5" fill="none" stroke="#333" stroke-width="2.2"/></svg></div>
<div class="a" style="left:209px;top:4px;width:16px;height:14px;border:1px solid #4a6ea8;border-radius:3px;background:linear-gradient(#fdfdfb,#e2dfd4)"><svg width="14" height="12" style="display:block"><path d="M3.5 2.5 L10.5 9.5 M10.5 2.5 L3.5 9.5" fill="none" stroke="#8f8a70" stroke-width="1.6"/><circle cx="7" cy="6" r="1.3" fill="#b0ada0"/></svg></div>
<div class="a" style="left:5px;top:23px;width:23px;height:25px;background:#E0FEDC;border:1px solid #fff;border-top-color:#c8c5b8;border-left-color:#c8c5b8"></div>
<div class="val" style="left:9px;top:23px;font-size:23px;letter-spacing:0">1</div>
<div class="lab" style="left:30px;top:28px;letter-spacing:0.5px">A:</div>
<div class="lab" style="left:12.5px;top:58px;letter-spacing:0.4px">A-B:</div>
<div class="a" style="left:52px;top:20px;width:175px;height:1px;background:#c9c5b9"></div>
<div class="cell" style="left:52px;top:21px;width:170px;height:32px;border-left:1px solid #aca899"></div>
<div class="a" style="left:52px;top:53px;width:170px;height:1px;background:#aca899"></div>
<div class="cell" style="left:52px;top:54px;width:170px;height:31px;border-left:1px solid #aca899"></div>
<div class="a" style="left:222px;top:21px;width:1px;height:65px;background:#fbfaf6"></div>
<div class="a" style="left:52px;top:85px;width:171px;height:1px;background:#fbfaf6"></div>
<div class="val" style="left:52px;width:170px;text-align:center;top:24.2px">0.616 B</div>
<div class="val" style="left:52px;width:170px;text-align:center;top:57.2px">0.524 B</div>
</div>
<div class="dlg" style="left:454px;top:76px">
<div class="tt"><span>Напряжение</span></div>
<div class="a" style="left:195px;top:4px;width:14px;height:14px;background:linear-gradient(#f6f5f0,#e2dfd4);border-left:1px solid #fff"><svg width="14" height="14" style="display:block"><path d="M2.5 5 L6.5 9 L10.5 5" fill="none" stroke="#333" stroke-width="2.2"/></svg></div>
<div class="a" style="left:209px;top:4px;width:16px;height:14px;border:1px solid #4a6ea8;border-radius:3px;background:linear-gradient(#fdfdfb,#e2dfd4)"><svg width="14" height="12" style="display:block"><path d="M3.5 2.5 L10.5 9.5 M10.5 2.5 L3.5 9.5" fill="none" stroke="#8f8a70" stroke-width="1.6"/><circle cx="7" cy="6" r="1.3" fill="#b0ada0"/></svg></div>
<div class="a" style="left:5px;top:23px;width:23px;height:25px;background:#E0FEDC;border:1px solid #fff;border-top-color:#c8c5b8;border-left-color:#c8c5b8"></div>
<div class="val" style="left:9px;top:23px;font-size:23px;letter-spacing:0">2</div>
<div class="lab" style="left:30px;top:28px;letter-spacing:0.5px">A:</div>
<div class="lab" style="left:12.5px;top:58px;letter-spacing:0.4px">A-B:</div>
<div class="a" style="left:52px;top:20px;width:175px;height:1px;background:#c9c5b9"></div>
<div class="cell" style="left:52px;top:21px;width:170px;height:32px;border-left:1px solid #aca899"></div>
<div class="a" style="left:52px;top:53px;width:170px;height:1px;background:#aca899"></div>
<div class="cell" style="left:52px;top:54px;width:170px;height:31px;border-left:1px solid #aca899"></div>
<div class="a" style="left:222px;top:21px;width:1px;height:65px;background:#fbfaf6"></div>
<div class="a" style="left:52px;top:85px;width:171px;height:1px;background:#fbfaf6"></div>
<div class="val" style="left:52px;width:170px;text-align:center;top:24.2px">0.877 B</div>
<div class="val" style="left:52px;width:170px;text-align:center;top:57.2px">0.799 B</div>
</div>
<div class="a" style="left:82px;top:683px;width:852px;height:14px;background:#FBFAF8;border-top:1px solid #e6e3d6"></div>
<div class="a" style="left:83px;top:684px;width:14px;height:13px;background:linear-gradient(#f6f5f0,#e0ddd2);border:1px solid #d4d0c4;border-radius:2px"></div>
<svg class="a" style="left:83px;top:684px" width="14" height="13"><path d="M8.5 3.5L5.5 6.5L8.5 9.5" fill="none" stroke="#333" stroke-width="1.6"/></svg>
<div class="a" style="left:810px;top:684px;width:121px;height:13px;background:linear-gradient(#f6f5f0,#e4e1d6);border:1px solid #d4d0c4;border-radius:2px"></div>
<div class="a" style="left:866px;top:688px;width:8px;height:7px;background:repeating-linear-gradient(90deg,#8d8b80 0 1px,transparent 1px 2px)"></div>
</body></html>
